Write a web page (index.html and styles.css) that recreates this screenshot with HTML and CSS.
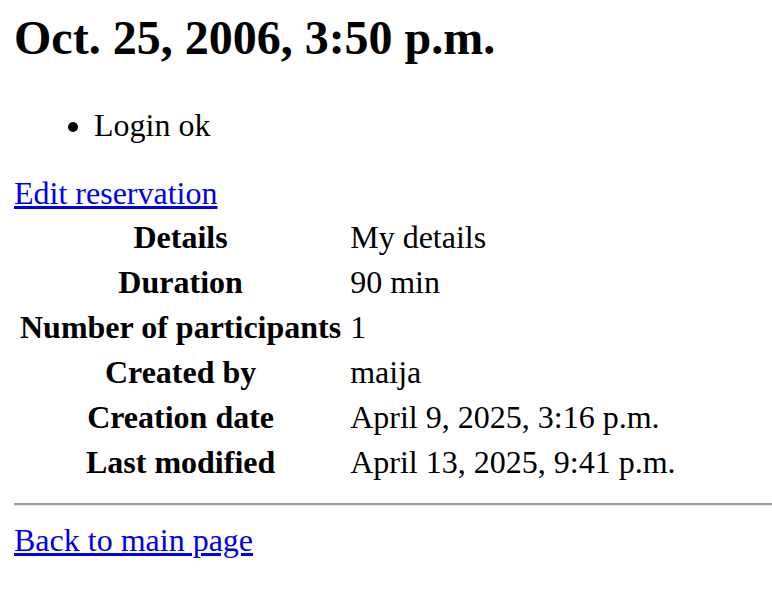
FILE: index.html
```html
<!DOCTYPE html>
<html>
<head>
<meta charset="utf-8">
<title>Reservation</title>
<link rel="stylesheet" href="styles.css">
</head>
<body>
<h1 class="title">Oct. 25, 2006, 3:50 p.m.</h1>
<ul class="messages">
  <li>Login ok</li>
</ul>
<div class="link-line"><a href="#">Edit reservation</a></div>
<table class="details">
  <tr><th>Details</th><td>My details</td></tr>
  <tr><th>Duration</th><td>90 min</td></tr>
  <tr><th>Number of participants</th><td>1</td></tr>
  <tr><th>Created by</th><td>maija</td></tr>
  <tr><th>Creation date</th><td>April 9, 2025, 3:16 p.m.</td></tr>
  <tr><th>Last modified</th><td>April 13, 2025, 9:41 p.m.</td></tr>
</table>
<hr class="sep">
<div class="link-line back"><a href="#">Back to main page</a></div>
</body>
</html>
```
FILE: styles.css
```css
html, body {
  background: #ffffff;
}
body {
  margin: 14px 0 0 14px;
  font-family: "Liberation Serif", "Times New Roman", serif;
  font-size: 32px;
  line-height: 36px;
  color: #000000;
}
.title {
  margin: 0 0 45px 0;
  font-size: 48px;
  line-height: 48px;
  font-weight: bold;
}
.messages {
  margin: 0 0 32px 0;
  padding-left: 80px;
}
.link-line {
  margin: 0;
}
a {
  color: #0000ee;
  text-decoration: underline;
}
.details {
  margin-top: 2px;
  border-collapse: separate;
  border-spacing: 3px;
  font-size: 32px;
}
.details th,
.details td {
  padding: 3px;
  line-height: 36px;
}
.details th {
  text-align: center;
  font-weight: bold;
}
.details td {
  text-align: left;
}
.sep {
  margin: 17px 0 0 0;
  height: 0;
  border: none;
  border-top: 2px solid #9d9d9d;
  border-bottom: 1px solid #e6e6e6;
}
.back {
  margin-top: 16px;
}
```
